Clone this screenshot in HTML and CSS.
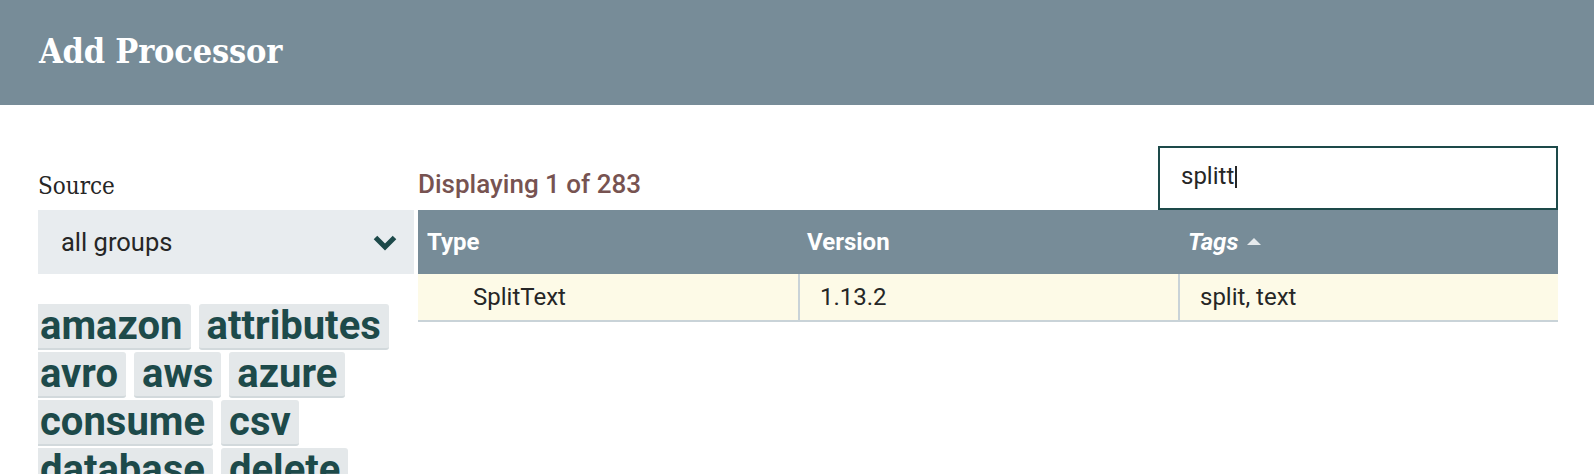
FILE: index.html
```html
<!DOCTYPE html>
<html>
<head>
<meta charset="utf-8">
<link rel="stylesheet" href="styles.css">
</head>
<body>
<div class="dialog-header">
  <h1 class="dialog-title">Add Processor</h1>
</div>
<div class="dialog-body">
  <div class="left-col">
    <div class="source-label">Source</div>
    <div class="combo">
      <span class="combo-text">all groups</span>
      <svg class="combo-arrow" width="24" height="17" viewBox="0 0 24 17"><polyline points="2.5,3.5 12,13 21.5,3.5" fill="none" stroke="#1d4a4a" stroke-width="5"/></svg>
    </div>
    <div class="tag-cloud-wrap">
      <ul class="tag-cloud">
        <li class="tag">amazon</li>
        <li class="tag">attributes</li>
        <li class="tag">avro</li>
        <li class="tag">aws</li>
        <li class="tag">azure</li>
        <li class="tag">consume</li>
        <li class="tag">csv</li>
        <li class="tag">database</li>
        <li class="tag">delete</li>
      </ul>
    </div>
  </div>
  <div class="right-col">
    <div class="toolbar">
      <div class="displaying">Displaying 1 of 283</div>
      <div class="search"><span class="search-text">splitt</span><span class="caret"></span></div>
    </div>
    <div class="table">
      <div class="thead">
        <div class="th">Type</div>
        <div class="th">Version</div>
        <div class="th th-sorted">Tags <span class="sort-up"></span></div>
      </div>
      <div class="tr">
        <div class="td td-type">SplitText</div>
        <div class="td td-sep">1.13.2</div>
        <div class="td td-sep">split, text</div>
      </div>
    </div>
  </div>
</div>
</body>
</html>
```
FILE: styles.css
```css
* { box-sizing: border-box; }
html, body { margin: 0; padding: 0; background: #fff; }
body { font-family: Roboto, "Noto Sans", sans-serif; color: #262626; overflow: hidden; height: 474px; }

.dialog-header {
  height: 105px;
  background: #778c98;
  display: flex;
  align-items: center;
  padding: 0 0 3px 39px;
}
.dialog-title {
  margin: 0;
  font-family: "DejaVu Serif Condensed", "DejaVu Serif", serif;
  font-weight: bold;
  font-size: 34px;
  letter-spacing: -0.2px;
  color: #fff;
}

.dialog-body {
  display: flex;
  gap: 4px;
  padding: 41px 36px 0 38px;
}
.left-col { width: 376px; flex: none; }
.right-col { flex: 1; min-width: 0; }

.source-label {
  font-family: "DejaVu Serif Condensed", "DejaVu Serif", serif;
  font-size: 24px;
  line-height: 24px;
  margin: 28px 0 12px;
  color: #262626;
}
.combo {
  height: 64px;
  background: #e8ecef;
  display: flex;
  align-items: center;
  justify-content: space-between;
  padding: 0 17px 0 23px;
}
.combo-text { font-size: 25.5px; color: #262626; }
.combo-arrow { display: block; }

.tag-cloud-wrap { margin-top: 30px; overflow: hidden; }
.tag-cloud {
  list-style: none;
  margin: 0 0 0 -6px;
  padding: 0;
  display: flex;
  flex-wrap: wrap;
  column-gap: 8px;
  row-gap: 2px;
}
.tag {
  font-weight: bold;
  font-size: 40px;
  line-height: 44px;
  color: #1d4a4a;
  background: #e4e8ea;
  border-bottom: 2px solid #d2d9dc;
  border-radius: 3px;
  padding: 0 8px;
}

.toolbar {
  height: 64px;
  display: flex;
  justify-content: space-between;
  align-items: flex-end;
}
.displaying {
  font-size: 26px;
  font-weight: 500;
  color: #775351;
  margin-bottom: 11px;
}
.search {
  width: 400px;
  height: 64px;
  border: 2px solid #1d4a4a;
  display: flex;
  align-items: center;
  padding: 0 0 4px 21px;
  font-size: 24px;
  color: #262626;
}
.caret {
  display: inline-block;
  width: 1.5px;
  height: 22px;
  background: #262626;
  margin-left: 1px;
  margin-top: 2px;
}

.thead, .tr {
  display: grid;
  grid-template-columns: 380px 380px 1fr;
}
.thead { height: 64px; background: #778c98; }
.th {
  display: flex;
  align-items: center;
  padding-left: 9px;
  color: #fff;
  font-weight: bold;
  font-size: 24px;
}
.th:nth-child(3) { padding-left: 10px; }
.th-sorted { font-style: italic; }
.sort-up {
  display: inline-block;
  width: 0;
  height: 0;
  border-left: 7px solid transparent;
  border-right: 7px solid transparent;
  border-bottom: 7px solid #e6eaed;
  margin-left: 9px;
  margin-top: -2px;
}
.tr {
  height: 48px;
  background: #fdfae7;
  border-bottom: 2px solid #c9d3d8;
}
.td {
  display: flex;
  align-items: center;
  font-size: 24px;
  color: #262626;
  padding-left: 22px;
}
.td-type { padding-left: 55px; }
.td-sep { border-left: 2px solid #c9d3d8; padding-left: 20px; }
```
